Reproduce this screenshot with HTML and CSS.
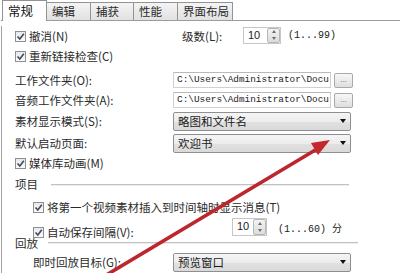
FILE: index.html
```html
<!DOCTYPE html>
<html lang="zh-CN">
<head>
<meta charset="utf-8">
<title>常规</title>
<link rel="stylesheet" href="styles.css">
</head>
<body>
<div class="dialog">
  <div class="tabs">
    <div class="tab active">常规</div>
    <div class="tab">编辑</div>
    <div class="tab narrow">捕获</div>
    <div class="tab">性能</div>
    <div class="tab wide">界面布局</div>
  </div>
  <div class="panel">
    <div class="row row-first">
      <div class="chk w-first"><span class="box"><svg viewBox="0 0 9 9" width="9" height="9"><polyline points="1.5,4.5 3.8,7 7.8,1.8" fill="none" stroke="#3d4b63" stroke-width="1.6"/></svg></span>撤消(N)</div>
      <span class="lvl">级数(L):</span>
      <div class="spin"><span class="val">10</span><span class="arrows"><i class="up"></i><i class="down"></i></span></div>
      <span class="range">(1...99)</span>
    </div>
    <div class="row">
      <div class="chk"><span class="box"><svg viewBox="0 0 9 9" width="9" height="9"><polyline points="1.5,4.5 3.8,7 7.8,1.8" fill="none" stroke="#3d4b63" stroke-width="1.6"/></svg></span>重新链接检查(C)</div>
    </div>
    <div class="row mt4">
      <span class="lbl">工作文件夹(O):</span>
      <div class="field">C:\Users\Administrator\Docu</div>
      <div class="dots">...</div>
    </div>
    <div class="row">
      <span class="lbl">音频工作文件夹(A):</span>
      <div class="field">C:\Users\Administrator\Docu</div>
      <div class="dots">...</div>
    </div>
    <div class="row mt1">
      <span class="lbl">素材显示模式(S):</span>
      <div class="combo"><span>略图和文件名</span><i class="caret"></i></div>
    </div>
    <div class="row mt2">
      <span class="lbl">默认启动页面:</span>
      <div class="combo"><span>欢迎书</span><i class="caret"></i></div>
    </div>
    <div class="row">
      <div class="chk"><span class="box"><svg viewBox="0 0 9 9" width="9" height="9"><polyline points="1.5,4.5 3.8,7 7.8,1.8" fill="none" stroke="#3d4b63" stroke-width="1.6"/></svg></span>媒体库动画(M)</div>
    </div>
    <div class="row mt1">
      <span class="group">项目</span>
      <span class="rule rule-proj"></span>
    </div>
    <div class="row mt3 indent">
      <div class="chk"><span class="box"><svg viewBox="0 0 9 9" width="9" height="9"><polyline points="1.5,4.5 3.8,7 7.8,1.8" fill="none" stroke="#3d4b63" stroke-width="1.6"/></svg></span>将第一个视频素材插入到时间轴时显示消息(T)</div>
    </div>
    <div class="row mt5 indent">
      <div class="chk w-save"><span class="box"><svg viewBox="0 0 9 9" width="9" height="9"><polyline points="1.5,4.5 3.8,7 7.8,1.8" fill="none" stroke="#3d4b63" stroke-width="1.6"/></svg></span>自动保存间隔(V):</div>
      <div class="spin spin-save"><span class="val">10</span><span class="arrows"><i class="up"></i><i class="down"></i></span></div>
      <span class="range range-save">(1...60) 分</span>
    </div>
    <div class="row row-group2">
      <span class="group">回放</span>
      <span class="rule rule-play"></span>
    </div>
    <div class="row indent">
      <span class="lbl lbl-indent">即时回放目标(G):</span>
      <div class="combo"><span>预览窗口</span><i class="caret"></i></div>
    </div>
  </div>
</div>
<svg class="arrow" width="400" height="273" viewBox="0 0 400 273">
  <line x1="103" y1="277" x2="317" y2="149" stroke="#bd262c" stroke-width="3.6" stroke-linecap="round"/>
  <polygon points="330,140 318,155 311,143" fill="#c4282e"/>
</svg>
</body>
</html>
```
FILE: styles.css
```css
* { box-sizing: border-box; margin: 0; padding: 0; }
html, body { width: 400px; height: 273px; overflow: hidden; background: #fff; }
body {
  position: relative;
  font-family: "Noto Sans CJK SC", "Noto Sans", sans-serif;
  font-size: 11.5px;
  color: #2a2a2a;
}
.dialog { padding-left: 1px; }

.tabs {
  display: flex;
  align-items: flex-end;
  height: 21px;
  padding-left: 1px;
  border-bottom: 1px solid #9c9c9c;
}
.tab {
  width: 45px;
  height: 18px;
  margin-right: -1px;
  padding-left: 5px;
  line-height: 16px;
  border: 1px solid #939393;
  border-bottom: none;
  background: linear-gradient(#f4f4f4, #e1e1e1);
  color: #2a2a2a;
}
.tab.narrow { width: 44px; }
.tab.wide { width: 56px; }
.tab.active {
  position: relative;
  z-index: 1;
  height: 21px;
  margin-bottom: -1px;
  padding-top: 1px;
  background: #fff;
  line-height: 17px;
  font-size: 12.5px;
  color: #111;
}

.panel {
  height: 252px;
  border-left: 1px solid #a3a3a3;
  padding-left: 13px;
}
.row { display: flex; align-items: center; height: 20px; white-space: nowrap; }
.row-first { margin-top: 5px; }
.mt1 { margin-top: 1px; }
.mt2 { margin-top: 2px; }
.mt3 { margin-top: 3px; }
.mt4 { margin-top: 4px; }
.mt5 { margin-top: 5px; }
.indent { padding-left: 18px; }
.row-group2 { height: 18px; margin-top: -8px; }

.chk { display: flex; align-items: center; }
.w-first { width: 167px; }
.w-save { width: 199px; }
.box {
  display: flex;
  align-items: center;
  justify-content: center;
  width: 11px;
  height: 11px;
  margin-right: 3px;
  border: 1px solid #8e8f8f;
  background: linear-gradient(#e9e9e9, #fbfbfb);
}

.lvl { width: 61px; }
.lbl { width: 158px; }
.lbl-indent { width: 140px; }

.spin {
  display: flex;
  width: 38px;
  height: 17px;
  margin-top: -2px;
  border: 1px solid #c6c6c6;
  background: #fff;
}
.spin-save { width: 35px; height: 18px; margin-top: -10px; }
.val { flex: 1; padding-left: 4px; font: 11px/15px "Liberation Sans", sans-serif; color: #222; }
.arrows {
  display: flex;
  flex-direction: column;
  align-items: center;
  justify-content: space-around;
  width: 13px;
  border: 1px solid #b7b7b7;
  border-radius: 2px;
  background: linear-gradient(#f3f3f3, #dcdcdc);
}
.up, .down { width: 0; height: 0; border-left: 2.5px solid transparent; border-right: 2.5px solid transparent; }
.up { border-bottom: 3px solid #6d6d6d; }
.down { border-top: 3px solid #6d6d6d; }

.range { margin-left: 7px; margin-top: -2px; font: 10px "Liberation Mono", monospace; color: #222; }
.range-save { margin-left: 11px; margin-top: -10px; font-size: 10px; }

.field {
  width: 158px;
  height: 16px;
  overflow: hidden;
  padding-left: 3px;
  border: 1px solid #d0d0d0;
  border-top-color: #b9b9b9;
  font: 9.4px/14px "Liberation Mono", monospace;
  color: #222;
  background: #fff;
}
.dots {
  width: 19px;
  height: 15px;
  margin-left: 3px;
  overflow: hidden;
  border: 1px solid #a9a9a9;
  border-radius: 2px;
  background: linear-gradient(#f7f7f7, #dedede);
  font: 8px/11px "Liberation Sans", sans-serif;
  text-align: center;
  color: #666;
}

.combo {
  display: flex;
  align-items: center;
  justify-content: space-between;
  width: 178px;
  height: 19px;
  padding: 0 4px 0 4px;
  border: 1px solid #8f8f8f;
  border-radius: 2px;
  background: linear-gradient(#f5f5f5 0%, #ececec 50%, #e1e1e1 51%, #d9d9d9 100%);
  color: #1a1a1a;
}
.caret {
  width: 0; height: 0;
  border-left: 3.5px solid transparent;
  border-right: 3.5px solid transparent;
  border-top: 4px solid #111;
}

.group { color: #2a2a2a; }
.rule {
  height: 2px;
  border-top: 1px solid #c2c2c2;
  border-bottom: 1px solid #ececec;
}
.rule-proj { width: 298px; margin-left: 13px; margin-top: 2px; }
.rule-play { width: 310px; margin-left: 10px; margin-top: -1px; }

.arrow { position: absolute; left: 0; top: 0; pointer-events: none; }
```
